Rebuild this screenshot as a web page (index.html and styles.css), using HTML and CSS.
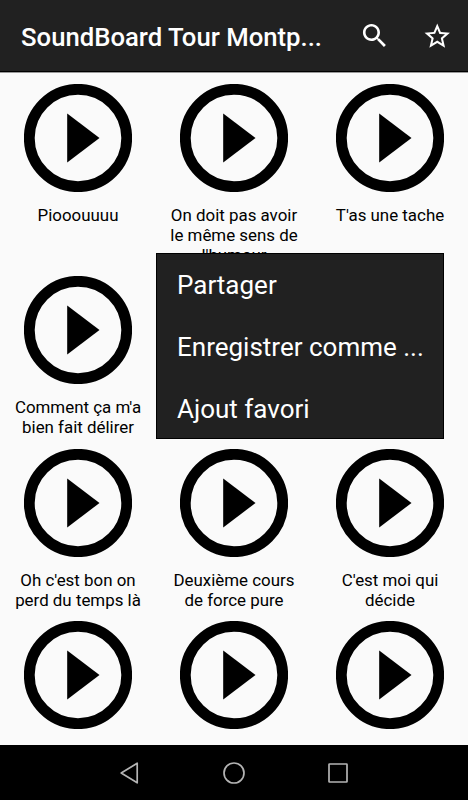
FILE: index.html
```html
<!DOCTYPE html>
<html lang="fr">
<head>
<meta charset="utf-8">
<title>SoundBoard</title>
<link rel="stylesheet" href="styles.css">
</head>
<body>
<svg width="0" height="0" class="defs">
  <symbol id="play" viewBox="0 0 108 108">
    <circle cx="54" cy="54" r="48.7" fill="none" stroke="#000" stroke-width="10.8"/>
    <path d="M43.2 29.5 75.5 54 43.2 78.5z"/>
  </symbol>
</svg>
<header class="bar">
  <h1 class="title">SoundBoard Tour Montp...</h1>
  <svg class="action" viewBox="0 0 24 24"><path d="M15.5 14h-.79l-.28-.27C15.41 12.59 16 11.11 16 9.5 16 5.91 13.09 3 9.5 3S3 5.91 3 9.5 5.91 16 9.5 16c1.61 0 3.09-.59 4.23-1.57l.27.28v.79l5 4.99L20.49 19l-4.99-5zm-6 0C7.01 14 5 11.99 5 9.5S7.01 5 9.5 5 14 7.01 14 9.5 11.99 14 9.5 14z"/></svg>
  <svg class="action star" viewBox="0 0 24 24"><path d="M22 9.24l-7.19-.62L12 2 9.19 8.63 2 9.24l5.46 4.73L5.82 21 12 17.27 18.18 21l-1.63-7.03L22 9.24zM12 15.4l-3.76 2.27 1-4.28-3.32-2.88 4.38-.38L12 6.1l1.71 4.04 4.38.38-3.32 2.88 1 4.28L12 15.4z"/></svg>
</header>
<main class="grid">
  <div class="cell"><svg class="play"><use href="#play"/></svg><p>Piooouuuu</p></div>
  <div class="cell"><svg class="play"><use href="#play"/></svg><p>On doit pas avoir<br>le même sens de<br>l'humour</p></div>
  <div class="cell"><svg class="play"><use href="#play"/></svg><p>T'as une tache</p></div>
  <div class="cell"><svg class="play"><use href="#play"/></svg><p>Comment ça m'a<br>bien fait délirer</p></div>
  <div class="cell"><svg class="play"><use href="#play"/></svg></div>
  <div class="cell"><svg class="play"><use href="#play"/></svg></div>
  <div class="cell"><svg class="play"><use href="#play"/></svg><p>Oh c'est bon on<br>perd du temps là</p></div>
  <div class="cell"><svg class="play"><use href="#play"/></svg><p>Deuxième cours<br>de force pure</p></div>
  <div class="cell"><svg class="play"><use href="#play"/></svg><p>C'est moi qui<br>décide</p></div>
  <div class="cell"><svg class="play"><use href="#play"/></svg></div>
  <div class="cell"><svg class="play"><use href="#play"/></svg></div>
  <div class="cell"><svg class="play"><use href="#play"/></svg></div>
</main>
<div class="menu">
  <div class="item">Partager</div>
  <div class="item">Enregistrer comme ...</div>
  <div class="item">Ajout favori</div>
</div>
<nav class="nav">
  <svg viewBox="0 0 24 24"><path d="M3.2 12 19.2 2.2V21.8z"/></svg>
  <svg viewBox="0 0 24 24"><circle cx="12" cy="12" r="10"/></svg>
  <svg viewBox="0 0 24 24"><rect x="3" y="3" width="18" height="18" rx=".5"/></svg>
</nav>
</body>
</html>
```
FILE: styles.css
```css
* { box-sizing: border-box; }
body {
  margin: 0;
  width: 468px;
  height: 800px;
  overflow: hidden;
  position: relative;
  display: flex;
  flex-direction: column;
  background: #fafafa;
  color: #000;
  font-family: Roboto, sans-serif;
}
.defs { position: absolute; }
.bar {
  flex: none;
  height: 72px;
  display: flex;
  align-items: center;
  padding: 1px 16px 0 21px;
  background: #212121;
  border-bottom: 1px solid #000;
  box-shadow: 0 1px 0 #999;
  color: #fff;
}
.title {
  flex: 1;
  margin: 2px 0 0;
  font-size: 25.7px;
  font-weight: 500;
  line-height: 32px;
  white-space: nowrap;
}
.action { width: 31.5px; height: 31.5px; fill: #fff; }
.star { width: 30.5px; height: 30.5px; margin: 1px 0 0 31.5px; }
.grid {
  flex: 1;
  min-height: 0;
  overflow: hidden;
  display: grid;
  grid-template-columns: repeat(3, 156px);
  grid-template-rows: 192.6px 172.4px 172.4px 172.4px;
  padding-top: 11.6px;
}
.cell { display: flex; flex-direction: column; align-items: center; }
.play { width: 108px; height: 108px; flex: none; }
.cell p {
  margin: 13px 0 0;
  font-size: 16.9px;
  line-height: 20px;
  text-align: center;
  white-space: nowrap;
}
.menu {
  position: absolute;
  left: 156px;
  top: 253px;
  width: 288px;
  height: 186px;
  background: #212121;
  box-shadow: inset 0 0 0 1px #000;
  color: #fff;
}
.item {
  height: 62.2px;
  padding: 1px 0 0 21px;
  font-size: 26px;
  line-height: 62px;
  white-space: nowrap;
}
.nav {
  flex: none;
  height: 55px;
  display: flex;
  justify-content: center;
  align-items: center;
  gap: 80px;
  background: #000;
}
.nav svg {
  width: 24px;
  height: 24px;
  fill: none;
  stroke: #b4b4b4;
  stroke-width: 1.7;
  stroke-linejoin: round;
}
```
